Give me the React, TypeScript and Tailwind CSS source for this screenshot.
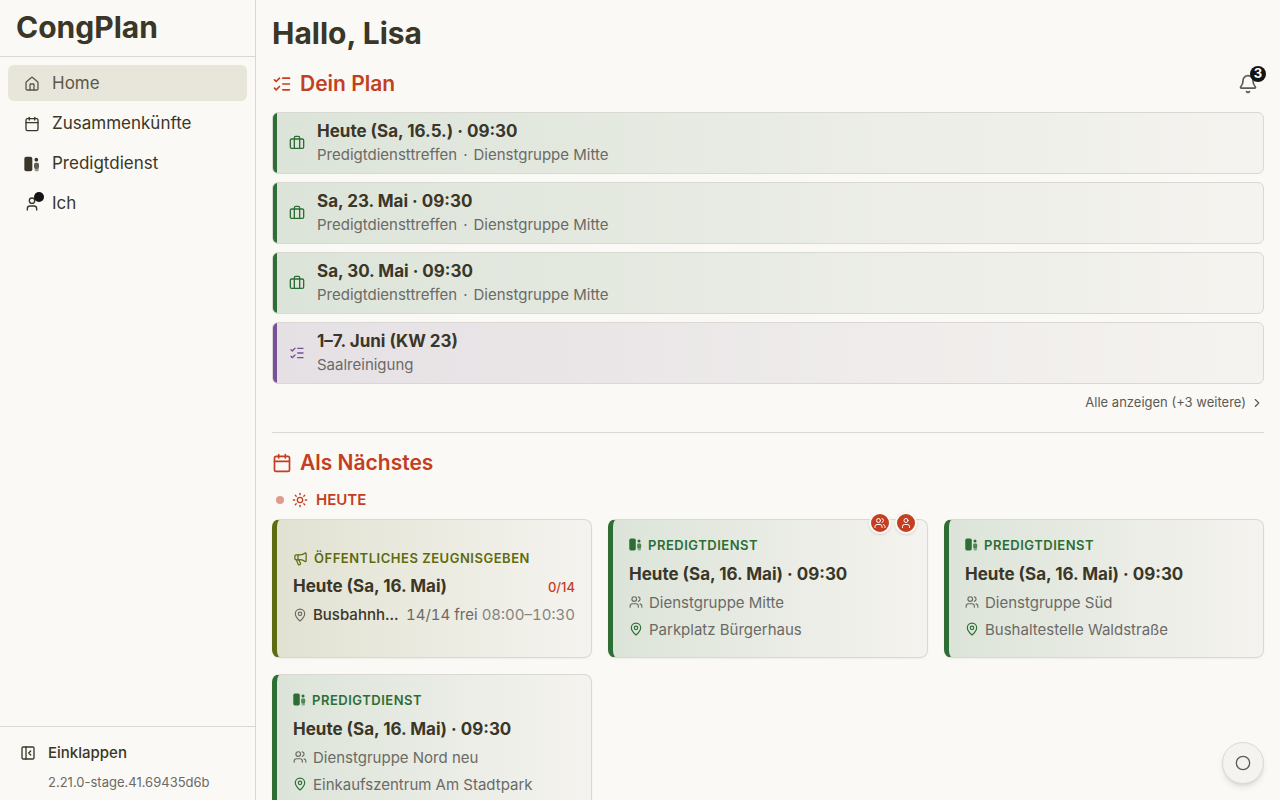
import type { ReactNode } from 'react'
import {
  Bell,
  Briefcase,
  Calendar,
  ChevronRight,
  Circle,
  House,
  ListChecks,
  MapPin,
  Megaphone,
  PanelLeftClose,
  Sun,
  User,
  Users,
} from 'lucide-react'
import { clsx } from 'clsx'

function MinistryIcon({ className }: { className?: string }) {
  return (
    <svg viewBox="0 0 24 24" fill="currentColor" className={className} aria-hidden="true">
      <rect x="0.5" y="1" width="12" height="22" rx="3" />
      <circle cx="18.5" cy="5.5" r="2.8" />
      <rect x="15" y="10" width="7.5" height="9" rx="2.5" opacity="0.8" />
      <rect x="16" y="18" width="6" height="5" rx="1.5" opacity="0.5" />
    </svg>
  )
}

const nav = [
  { label: 'Home', icon: House, active: true },
  { label: 'Zusammenkünfte', icon: Calendar },
  { label: 'Predigtdienst', icon: MinistryIcon },
  { label: 'Ich', icon: User, dot: true },
]

const plan = [
  { title: 'Heute (Sa, 16.5.) · 09:30', parts: ['Predigtdiensttreffen', 'Dienstgruppe Mitte'] },
  { title: 'Sa, 23. Mai · 09:30', parts: ['Predigtdiensttreffen', 'Dienstgruppe Mitte'] },
  { title: 'Sa, 30. Mai · 09:30', parts: ['Predigtdiensttreffen', 'Dienstgruppe Mitte'] },
  { title: '1–7. Juni (KW 23)', parts: ['Saalreinigung'], cleaning: true },
]

const meetings = [
  { group: 'Dienstgruppe Mitte', place: 'Parkplatz Bürgerhaus', mine: true },
  { group: 'Dienstgruppe Süd', place: 'Bushaltestelle Waldstraße' },
  { group: 'Dienstgruppe Nord neu', place: 'Einkaufszentrum Am Stadtpark' },
]

function Sidebar() {
  return (
    <aside className="sticky top-0 flex h-screen w-64 shrink-0 flex-col border-r border-[#d9d8d2]">
      <div className="flex h-[57px] items-center border-b border-[#d9d8d2] px-4 pb-0.5">
        <span className="text-[30px] leading-9 font-bold">CongPlan</span>
      </div>

      <nav className="flex flex-1 flex-col gap-1 p-2">
        {nav.map(({ label, icon: Icon, active, dot }) => (
          <a
            key={label}
            href="#"
            className={clsx(
              'flex h-9 items-center gap-3 rounded-md px-4 pt-px text-[17px]',
              active && 'bg-[#e8e6da] text-[#5c5748]'
            )}
          >
            <span className="relative">
              <Icon className="size-4" />
              {dot && <span className="absolute -top-1 -right-1 size-2.5 rounded-full bg-[#141414]" />}
            </span>
            {label}
          </a>
        ))}
      </nav>

      <div className="border-t border-[#d9d8d2] px-5 pt-3 pb-1.5">
        <button className="flex h-7 items-center gap-3 text-[15px] font-medium">
          <PanelLeftClose className="size-4" />
          Einklappen
        </button>
        <p className="mt-[3px] pl-7 text-[13px] leading-6 text-[#6b6a66]">2.21.0-stage.41.69435d6b</p>
      </div>
    </aside>
  )
}

function PlanItem({ title, parts, cleaning }: { title: string; parts: string[]; cleaning?: boolean }) {
  const Icon = cleaning ? ListChecks : Briefcase
  return (
    <li>
      <a
        href="#"
        className={clsx(
          'flex overflow-hidden rounded-md border border-[#d9d8d2] bg-linear-to-r/srgb to-[#f5f3ef]',
          cleaning ? 'from-[#e5e0e4] text-[#774f9b]' : 'from-[#dce4d9] text-[#2d6e35]'
        )}
      >
        <span className="w-1 bg-current" />
        <span className="flex items-center gap-3 px-3 py-1.5">
          <Icon className="size-4" />
          <span>
            <span className="block text-[17px] leading-6 font-bold text-[#3a3628]">{title}</span>
            <span className="flex gap-1.5 text-[15px] leading-6 text-[#6b6a66]">
              {parts.map((part, i) => (
                <span key={part} className="flex gap-1.5">
                  {i > 0 && <span>·</span>}
                  {part}
                </span>
              ))}
            </span>
          </span>
        </span>
      </a>
    </li>
  )
}

function Card({ className, children }: { className: string; children: ReactNode }) {
  return (
    <article
      className={clsx(
        'relative flex min-h-[139px] flex-col justify-center rounded-lg border border-l-[5px] border-[#d9d8d2] bg-linear-to-r/srgb to-[#f5f3ef] px-4 py-2 shadow-xs',
        className
      )}
    >
      {children}
    </article>
  )
}

function Badge({ icon: Icon }: { icon: typeof User }) {
  return (
    <span className="flex size-[22px] items-center justify-center rounded-full border-2 border-[#faf9f5] bg-[#c43e22] text-white shadow-sm">
      <Icon className="size-3" />
    </span>
  )
}

function MeetingCard({ group, place, mine }: { group: string; place: string; mine?: boolean }) {
  return (
    <Card className="border-l-[#2d6e35] from-[#dce4d9]">
      {mine && (
        <div className="absolute -top-2 right-2.5 flex gap-1">
          <Badge icon={Users} />
          <Badge icon={User} />
        </div>
      )}
      <p className="flex items-center gap-1.5 text-[13px] leading-5 font-semibold tracking-[0.04em] text-[#2d6e35]">
        <MinistryIcon className="size-[13px]" />
        PREDIGTDIENST
      </p>
      <h3 className="mt-[5px] text-[17px] leading-7 font-bold">Heute (Sa, 16. Mai) · 09:30</h3>
      <p className="mt-px flex items-center gap-1.5 text-[15px] leading-[27px] text-[#6b6a66]">
        <Users className="size-3.5" />
        {group}
      </p>
      <p className="flex items-center gap-1.5 text-[15px] leading-[27px] text-[#6b6a66]">
        <MapPin className="size-3.5 text-[#2d6e35]" />
        {place}
      </p>
    </Card>
  )
}

export default function App() {
  return (
    <div className="flex min-h-screen bg-[#faf9f5] font-['Inter',sans-serif] text-[#3a3628]">
      <Sidebar />

      <main className="min-w-0 flex-1 px-4 py-3">
        <h1 className="text-[30px] leading-[42px] font-bold">Hallo, Lisa</h1>

        <section className="mt-3 border-b border-[#d9d8d2] pb-[15px]">
          <div className="flex h-9 items-center justify-between">
            <h2 className="flex items-center gap-2 text-[21px] leading-8 font-semibold text-[#c43e22]">
              <ListChecks className="size-5" />
              Dein Plan
            </h2>
            <button aria-label="Benachrichtigungen" className="relative px-1.5 text-[#5c5a55]">
              <Bell className="size-5" />
              <span className="absolute -top-2 -right-0.5 size-4 rounded-full bg-[#141414] text-center text-[13px] leading-[14px] font-bold text-white">
                3
              </span>
            </button>
          </div>

          <ul className="mt-2.5 flex flex-col gap-2">
            {plan.map((item) => (
              <PlanItem key={item.title} {...item} />
            ))}
          </ul>

          <div className="mt-[5px] flex justify-end">
            <button className="flex h-7 items-center gap-1 text-[13px] text-[#5c5a55]">
              Alle anzeigen (+3 weitere)
              <ChevronRight className="size-3.5" />
            </button>
          </div>
        </section>

        <section className="mt-3.5">
          <h2 className="flex items-center gap-2 text-[21px] leading-8 font-semibold text-[#c43e22]">
            <Calendar className="size-5" />
            Als Nächstes
          </h2>
          <h3 className="mt-[9px] flex items-center gap-2 px-1 text-[15px] leading-6 font-semibold text-[#c43e22]">
            <span className="size-2 rounded-full bg-current opacity-50" />
            <Sun className="size-4" />
            HEUTE
          </h3>

          <div className="mt-[7px] grid grid-cols-3 gap-4">
            <Card className="border-l-[#5f6b10] from-[#e1e2d2]">
              <p className="flex items-center gap-1.5 text-[13px] leading-5 font-semibold tracking-[0.04em] text-[#5f6b10]">
                <Megaphone className="size-[15px]" />
                ÖFFENTLICHES ZEUGNISGEBEN
              </p>
              <div className="mt-1 flex items-baseline justify-between">
                <h3 className="text-[17px] leading-7 font-bold">Heute (Sa, 16. Mai)</h3>
                <span className="text-[13px] font-medium text-[#c43e22]">0/14</span>
              </div>
              <p className="mt-px flex items-center gap-1.5 text-[15px] leading-7 text-[#6b6a66]">
                <MapPin className="size-3.5 shrink-0" />
                <span className="min-w-0 flex-1 truncate font-medium text-[#3a3628]">Busbahnh...</span>
                <span className="whitespace-nowrap tabular-nums">
                  14/14 frei <span className="text-[#85847f]">08:00–10:30</span>
                </span>
              </p>
            </Card>
            {meetings.map((meeting) => (
              <MeetingCard key={meeting.group} {...meeting} />
            ))}
          </div>
        </section>
      </main>

      <button
        aria-label="Status"
        className="fixed right-4 bottom-4 flex size-[42px] items-center justify-center rounded-full border border-[#d9d8d2] bg-[#f5f3ef] text-[#5c5a55] shadow-md"
      >
        <Circle className="size-4" />
      </button>
    </div>
  )
}
